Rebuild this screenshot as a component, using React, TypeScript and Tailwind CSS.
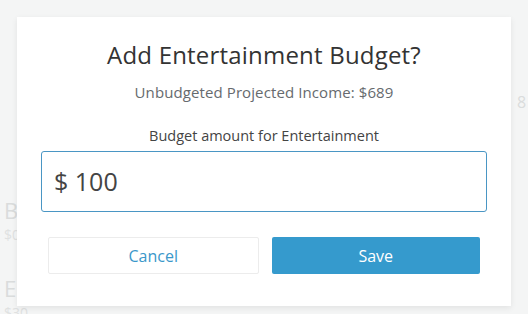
import React from 'react';

export default function App() {
  return (
    <div className="relative w-[528px] h-[314px] overflow-hidden bg-[#f4f5f5] font-['Open_Sans',sans-serif]">
      {/* faint page behind the modal */}
      <div className="absolute left-[4px] top-[194px] text-[22px] text-[#dadcdc]">B</div>
      <div className="absolute left-[4px] top-[224px] text-[14px] text-[#dfe1e1]">$0</div>
      <div className="absolute left-[4px] top-[272px] text-[22px] text-[#dadcdc]">E</div>
      <div className="absolute left-[4px] top-[302px] text-[14px] text-[#dfe1e1]">$30</div>
      <div className="absolute left-[517px] top-[90px] text-[16px] text-[#dadcdc]">8</div>

      <div className="absolute left-[17px] top-[17px] w-[494px] h-[289px] bg-white shadow-[0_2px_6px_rgba(0,0,0,0.08)] flex flex-col items-center">
        <h1 className="mt-[23px] text-[24px] leading-[30px] text-[#333333] tracking-[0.2px]">Add Entertainment Budget?</h1>
        <p className="mt-[12px] text-[15px] leading-[20px] text-[#666a6e] tracking-[0.1px]">Unbudgeted Projected Income: $689</p>
        <p className="mt-[25px] text-[14.5px] leading-[18px] text-[#444444]">Budget amount for Entertainment</p>
        <div className="mt-[6px] w-[446px] h-[61px] border border-[#4a96c4] rounded-[3px] flex items-center px-[12px] text-[25px] text-[#444444]">
          $ 100
        </div>
        <div className="mt-[25px] w-[432px] flex gap-[13px]">
          <button className="flex-1 h-[37px] border border-[#ececec] rounded-[2px] bg-white text-[16px] text-[#3b98ca]">Cancel</button>
          <button className="flex-1 h-[37px] rounded-[2px] bg-[#359acd] text-[16px] text-white">Save</button>
        </div>
      </div>
    </div>
  );
}
